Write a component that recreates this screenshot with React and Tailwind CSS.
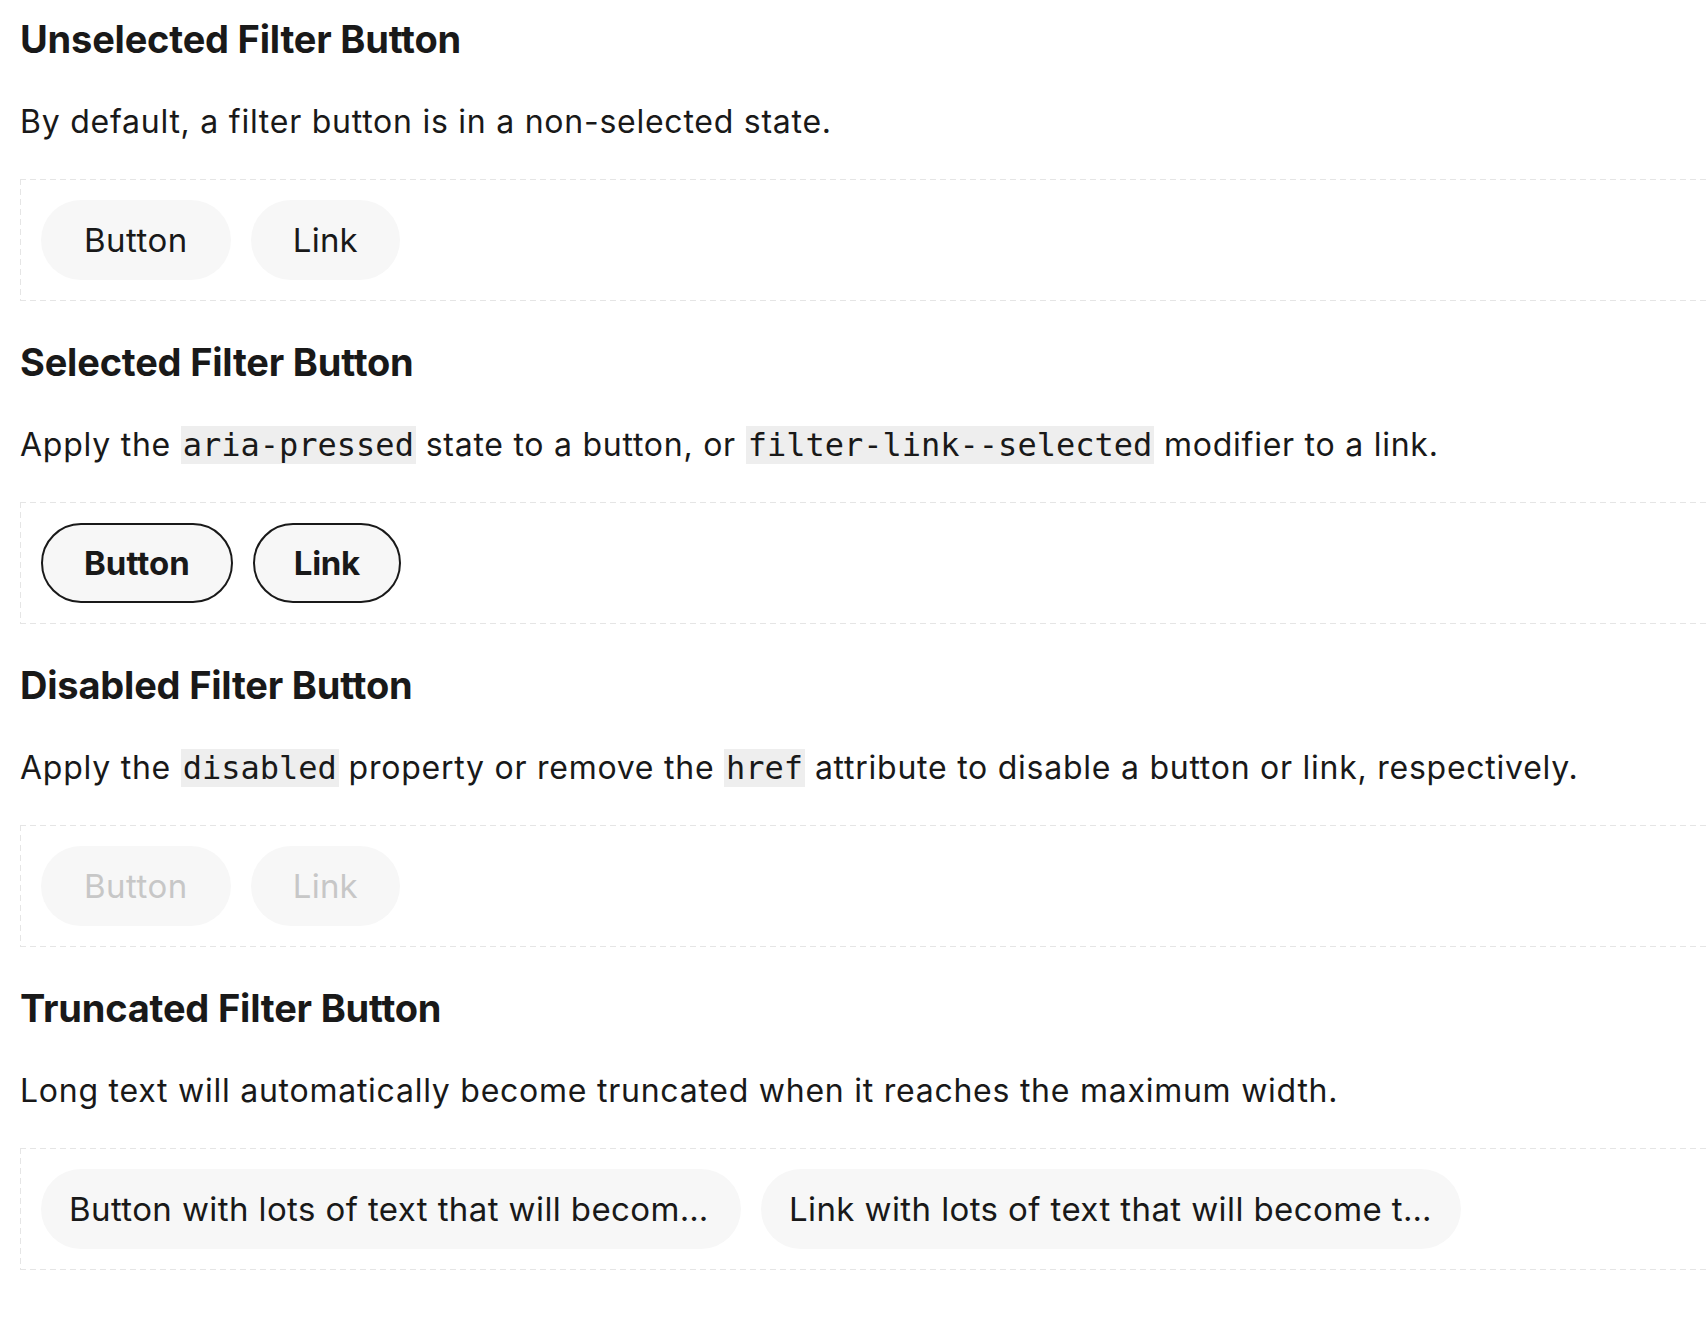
import React from 'react'

const dashedBox =
  'mt-[33px] -mr-16 p-[21px] flex items-center gap-5 bg-[linear-gradient(90deg,#e5e5e5_6px,transparent_6px),linear-gradient(90deg,#e5e5e5_6px,transparent_6px),linear-gradient(180deg,#e5e5e5_6px,transparent_6px),linear-gradient(180deg,#e5e5e5_6px,transparent_6px)] [background-size:10px_1px,10px_1px,1px_10px,1px_10px] [background-position:left_top,left_bottom,left_top,right_top] [background-repeat:repeat-x,repeat-x,repeat-y,repeat-y]'

const pill = 'inline-flex items-center h-[80px] rounded-full bg-[#f7f7f7] text-[33px] leading-none whitespace-nowrap'

function Code({ children }) {
  return (
    <code className="bg-[#eeeeee] px-[2px] text-[32px] leading-none tracking-normal font-['DejaVu_Sans_Mono',monospace] text-[#191919]">
      {children}
    </code>
  )
}

function Section({ title, children, first }) {
  return (
    <section className={first ? '' : 'mt-[38px]'}>
      <h2 className="text-[38px] leading-[46px] font-bold tracking-[-0.2px] text-[#191919]">{title}</h2>
      {children}
    </section>
  )
}

function Desc({ children }) {
  return <p className="mt-9 text-[32px] leading-[48px] tracking-[0.75px] text-[#191919] whitespace-nowrap">{children}</p>
}

export default function App() {
  return (
    <div className="min-h-screen w-full overflow-hidden bg-white font-['Inter',sans-serif]">
      <div className="pt-4 pl-5">
        <Section title="Unselected Filter Button" first>
          <Desc>By default, a filter button is in a non-selected state.</Desc>
          <div className={dashedBox}>
            <button className={`${pill} px-[43px] tracking-[0.5px] text-[#191919]`}>Button</button>
            <a className={`${pill} px-[42px] tracking-[0.2px] text-[#191919]`}>Link</a>
          </div>
        </Section>

        <Section title="Selected Filter Button">
          <Desc>
            Apply the <Code>aria-pressed</Code> state to a button, or <Code>filter-link--selected</Code> modifier to a link.
          </Desc>
          <div className={dashedBox}>
            <button aria-pressed="true" className={`${pill} px-[41px] border-2 border-[#191919] font-bold text-[#191919]`}>
              Button
            </button>
            <a className={`${pill} px-[39px] border-2 border-[#191919] font-bold tracking-[-0.3px] text-[#191919]`}>Link</a>
          </div>
        </Section>

        <Section title="Disabled Filter Button">
          <Desc>
            Apply the <Code>disabled</Code> property or remove the <Code>href</Code> attribute to disable a button or link, respectively.
          </Desc>
          <div className={dashedBox}>
            <button disabled className={`${pill} px-[43px] tracking-[0.5px] text-[#c7c7c7]`}>Button</button>
            <a className={`${pill} px-[42px] tracking-[0.2px] text-[#c7c7c7]`}>Link</a>
          </div>
        </Section>

        <Section title="Truncated Filter Button">
          <Desc>Long text will automatically become truncated when it reaches the maximum width.</Desc>
          <div className={dashedBox}>
            <button className={`${pill} max-w-[700px] px-[28px] tracking-[0.4px] text-[#191919]`}>
              <span className="block overflow-hidden text-ellipsis">Button with lots of text that will become truncated</span>
            </button>
            <a className={`${pill} max-w-[700px] px-[28px] tracking-[0.4px] text-[#191919]`}>
              <span className="block overflow-hidden text-ellipsis">Link with lots of text that will become truncated</span>
            </a>
          </div>
        </Section>
      </div>
    </div>
  )
}
